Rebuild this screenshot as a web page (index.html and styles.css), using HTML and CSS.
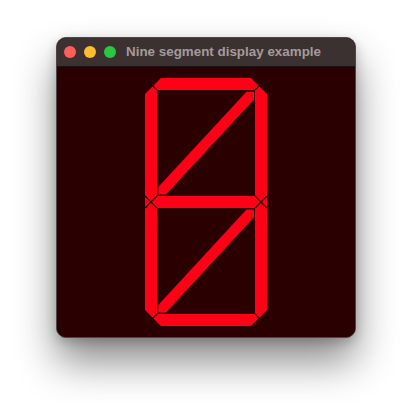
FILE: index.html
```html
<!DOCTYPE html>
<html>
<head>
<meta charset="utf-8">
<link rel="stylesheet" href="styles.css">
</head>
<body>
<div class="window">
  <div class="titlebar">
    <span class="light red"></span>
    <span class="light yellow"></span>
    <span class="light green"></span>
    <span class="title">Nine segment display example</span>
  </div>
  <div class="content">
    <svg class="digit" width="298" height="270" viewBox="57 66 298 270">
      <g class="seg">
        <polygon points="161,77 251,77 259,85 255,89 157,89 153,85"/>
        <polygon points="145,93 153,85 157,89 157,195 151,201 145,195"/>
        <polygon points="267,93 259,85 255,89 255,195 261,201 267,195"/>
        <polygon points="145,195 151,201 145,207"/>
        <polygon points="267,195 261,201 267,207"/>
        <polygon points="151,201 157,195 255,195 261,201 255,207 157,207"/>
        <polygon points="145,207 151,201 157,207 157,313 153,317 145,309"/>
        <polygon points="267,207 261,201 255,207 255,313 259,317 267,309"/>
        <polygon points="153,317 157,313 255,313 259,317 251,325 161,325"/>
        <polygon points="158.3,193.5 158.3,186 246.5,90.8 254,90.8 254,98.3 165.8,193.5"/>
        <polygon points="158.3,311.5 158.3,304 246.5,208.5 254,208.5 254,216 165.8,311.5"/>
      </g>
      <g class="gap">
        <line x1="145" y1="77" x2="157" y2="89"/>
        <line x1="267" y1="77" x2="255" y2="89"/>
        <line x1="145" y1="325" x2="157" y2="313"/>
        <line x1="267" y1="325" x2="255" y2="313"/>
        <line x1="145" y1="195" x2="157" y2="207"/>
        <line x1="157" y1="195" x2="145" y2="207"/>
        <line x1="267" y1="195" x2="255" y2="207"/>
        <line x1="255" y1="195" x2="267" y2="207"/>
      </g>
    </svg>
  </div>
</div>
</body>
</html>
```

FILE: styles.css
```css
html, body {
  margin: 0;
  padding: 0;
}
body {
  width: 412px;
  height: 412px;
  overflow: hidden;
  background: #ffffff;
  font-family: "Liberation Sans", Arial, sans-serif;
}
.window {
  margin: 37px 0 0 56px;
  width: 300px;
  height: 301px;
  box-sizing: border-box;
  border: 1px solid #4d4747;
  border-radius: 10px;
  overflow: hidden;
  background: #2b0000;
  box-shadow: 0 24px 40px rgba(0, 0, 0, 0.45), 0 4px 12px rgba(0, 0, 0, 0.2);
  display: flex;
  flex-direction: column;
}
.titlebar {
  height: 28px;
  flex: none;
  background: #3b3131;
  border-bottom: 1px solid #1c1414;
  display: flex;
  align-items: center;
  padding-left: 7px;
  gap: 8px;
}
.light {
  width: 12px;
  height: 12px;
  border-radius: 50%;
  flex: none;
}
.red { background: #ff5f57; }
.yellow { background: #febc2e; }
.green { background: #28c840; }
.title {
  margin-left: 2px;
  color: #a59b9b;
  font-weight: bold;
  font-size: 13.4px;
  line-height: 16px;
}
.content {
  flex: 1;
  background: #2b0000;
}
.digit {
  display: block;
}
.seg polygon {
  fill: #ff0016;
}
.gap line {
  stroke: #2b0000;
  stroke-width: 1.3;
}
```
